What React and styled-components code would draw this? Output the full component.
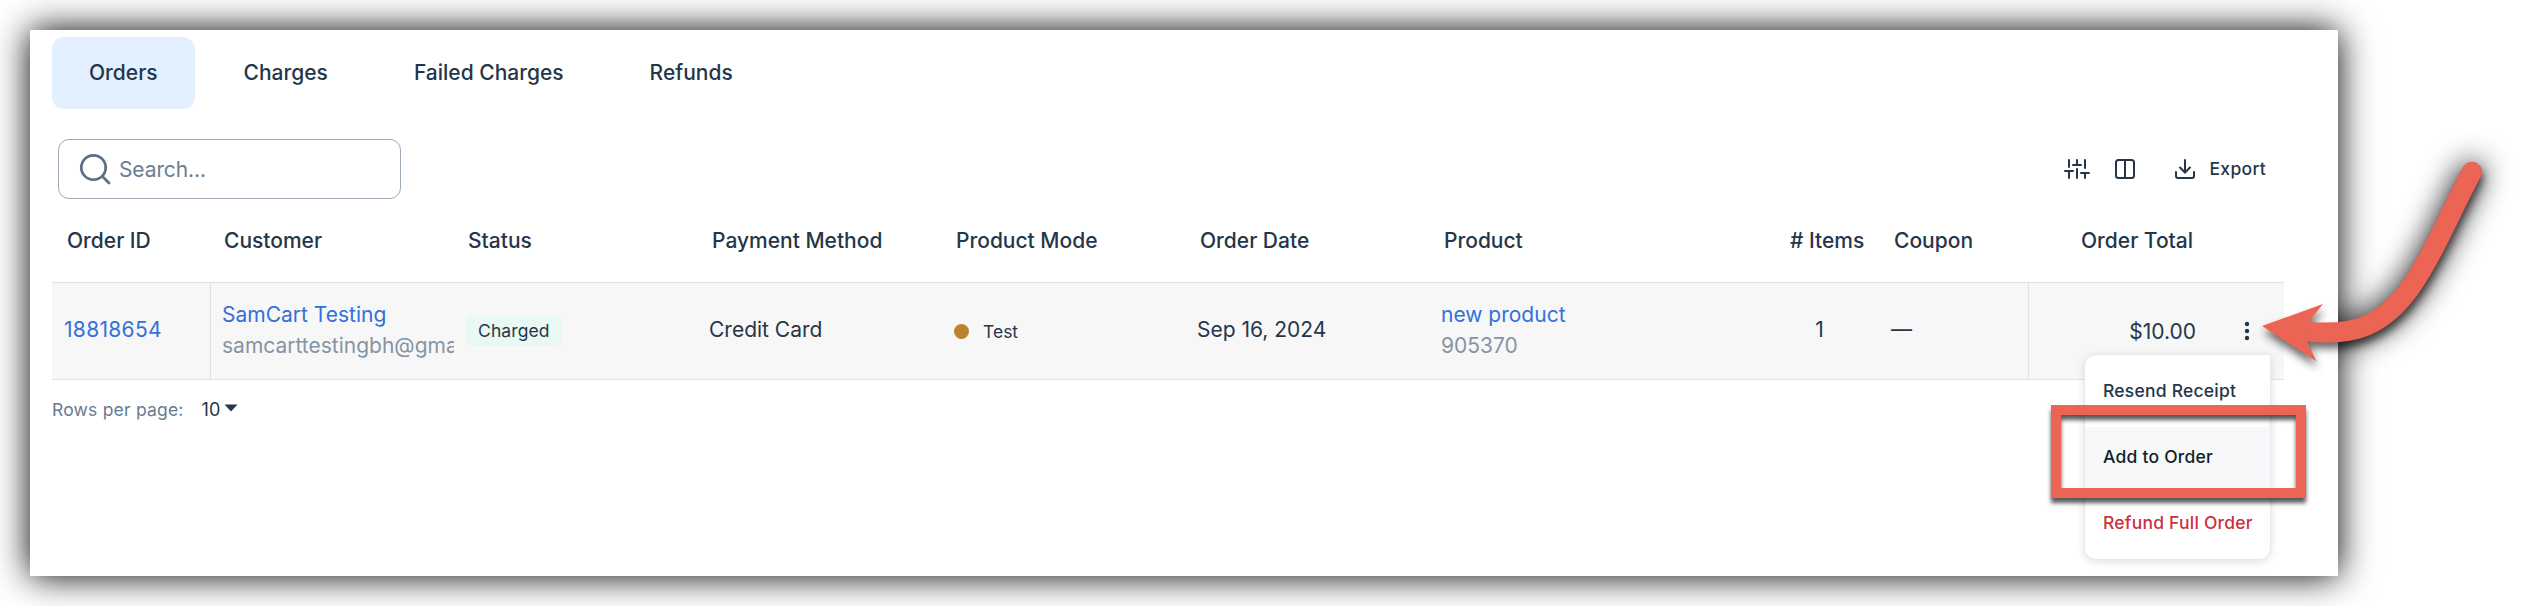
import React from "react";
import styled, { createGlobalStyle } from "styled-components";

const columns = [
  "Order ID",
  "Customer",
  "Status",
  "Payment Method",
  "Product Mode",
  "Order Date",
  "Product",
  "# Items",
  "Coupon",
  "Order Total",
];
const tabs = ["Orders", "Charges", "Failed Charges", "Refunds"];

const SlidersIcon = () => (
  <svg width="26" height="24" viewBox="0 0 26 24">
    <path
      d="M5 3v7M1 14h8M5 14v7M13 3v5M9 8h8M13 12v9M21 3v8M17 16h8M21 16v5"
      fill="none"
      stroke="currentColor"
      strokeWidth="2"
      strokeLinecap="round"
    />
  </svg>
);

const ColumnsIcon = () => (
  <svg width="22" height="22" viewBox="0 0 22 22">
    <g fill="none" stroke="currentColor" strokeWidth="2">
      <rect x="2" y="2" width="18" height="18" rx="2.5" />
      <path d="M11 2v18" />
    </g>
  </svg>
);

const DownloadIcon = () => (
  <svg width="22" height="22" viewBox="0 0 22 22">
    <path
      d="M11 2v12M6 9.500l5 5 5-5M2 14v4a2 2 0 0 0 2 2h14a2 2 0 0 0 2-2v-4"
      fill="none"
      stroke="currentColor"
      strokeWidth="2"
      strokeLinecap="round"
    />
  </svg>
);

const ArrowShape = () => (
  <>
    <path
      d="M2472 172C2455 202 2428 268 2404 296C2380 325 2355 336 2308 331.600"
      fill="none"
      stroke="#ec6453"
      strokeWidth="20"
      strokeLinecap="round"
    />
    <path d="M2262 326L2323 304L2309 321.500L2307 341.500L2316.500 361.500Z" fill="#ec6453" />
  </>
);

const App = () => {
  return (
    <>
      <GlobalStyle />
      {/* wide soft shadow of the arrow, kept under the panel */}
      <ArrowHalo width="288" height="260" viewBox="2240 140 288 260">
        <ArrowShape />
      </ArrowHalo>
      <Panel>
        <Tabs>
          {tabs.map((tab, index) => (
            <Tab key={tab} $active={index === 0}>
              {tab}
            </Tab>
          ))}
        </Tabs>
        <Toolbar>
          <SearchBox>
            <svg width="32" height="32" viewBox="0 0 32 32">
              <g fill="none" stroke="currentColor" strokeWidth="2.8">
                <circle cx="14.500" cy="14.500" r="12.200" />
                <path d="M23.500 23.500l6.500 6.500" strokeLinecap="round" />
              </g>
            </svg>
            <input type="text" placeholder="Search..." />
          </SearchBox>
          <Actions>
            <SlidersIcon />
            <ColumnsIcon />
            <ExportBtn type="button">
              <DownloadIcon />
              <span>Export</span>
            </ExportBtn>
          </Actions>
        </Toolbar>
        {/* orders table */}
        <HeadRow>
          {columns.map((c) => (
            <HeadCell key={c}>{c}</HeadCell>
          ))}
        </HeadRow>
        <Row>
          <Cell>
            <OrderLink>18818654</OrderLink>
          </Cell>
          <Cell $divider $stacked>
            <Link>SamCart Testing</Link>
            <Muted>samcarttestingbh@gmail.com</Muted>
          </Cell>
          <Cell>
            <Badge>Charged</Badge>
          </Cell>
          <Cell>Credit Card</Cell>
          <Cell>
            <Mode>Test</Mode>
          </Cell>
          <Cell>Sep 16, 2024</Cell>
          <Cell $stacked>
            <Link>new product</Link>
            <Muted>905370</Muted>
          </Cell>
          <Cell $center>1</Cell>
          <Cell>—</Cell>
          <TotalCell>
            <span>$10.00</span>
            <svg width="6" height="20" viewBox="0 0 6 20" fill="currentColor">
              <circle cx="3" cy="3" r="2.200" />
              <circle cx="3" cy="10" r="2.200" />
              <circle cx="3" cy="17" r="2.200" />
            </svg>
            <Menu>
              <MenuItem>Resend Receipt</MenuItem>
              <MenuItem $active>Add to Order</MenuItem>
              <MenuItem $danger>Refund Full Order</MenuItem>
            </Menu>
          </TotalCell>
        </Row>
        {/* end of orders table */}
        <Pager>
          <span>Rows per page:</span>
          <strong>10</strong>
          <svg width="14" height="8" viewBox="0 0 14 8">
            <path d="M0.500 0.500h13l-6.500 7z" fill="#25364a" />
          </svg>
        </Pager>
        <Highlight />
      </Panel>
      <Arrow width="288" height="260" viewBox="2240 140 288 260">
        <ArrowShape />
      </Arrow>
    </>
  );
};

const GlobalStyle = createGlobalStyle`
  * {
    box-sizing: border-box;
  }
  body {
    margin: 0;
    height: 606px;
    overflow: hidden;
    background: #fff;
    color: #25364a;
    font-family: Inter, "Liberation Sans", sans-serif;
    font-size: 21px;
  }
  svg {
    display: block;
    flex: none;
  }
`;

const Panel = styled.main`
  position: relative;
  z-index: 1;
  width: 2308px;
  height: 546px;
  margin: 30px 0 0 30px;
  padding: 7px 54px 0 22px;
  background: #fff;
  box-shadow: 0 0 34px 0 #000;
`;

const Tabs = styled.nav`
  display: flex;
  gap: 12px;
`;

const Tab = styled.a`
  height: 72px;
  padding: 0 37px;
  border-radius: 12px;
  background: ${(props) => (props.$active ? "#e2f0ff" : "transparent")};
  font-weight: 500;
  line-height: 72px;
`;

const Toolbar = styled.div`
  display: flex;
  align-items: center;
  justify-content: space-between;
  height: 60px;
  margin-top: 30px;
  padding: 0 18px 0 6px;
`;

const SearchBox = styled.label`
  display: flex;
  align-items: center;
  gap: 8px;
  width: 343px;
  height: 60px;
  padding-left: 20px;
  border: 1px solid #9eabb9;
  border-radius: 11px;
  color: #5b7087;
  input {
    width: 250px;
    padding: 0;
    border: 0;
    outline: 0;
    background: none;
    font: inherit;
    letter-spacing: -0.1px;
  }
  input::placeholder {
    color: #6a7d92;
    opacity: 1;
  }
`;

const Actions = styled.div`
  display: flex;
  align-items: center;
  gap: 24px;
`;

const ExportBtn = styled.button`
  display: flex;
  align-items: center;
  gap: 13px;
  margin-left: 14px;
  padding: 0;
  border: 0;
  background: none;
  color: inherit;
  font: 500 17.5px Inter, sans-serif;
  letter-spacing: 0.3px;
  span {
    margin-top: -1px;
  }
`;

const HeadRow = styled.div`
  display: grid;
  grid-template-columns: 158px 244px 244px 244px 244px 244px 346px 104px 148px 256px;
  height: 83px;
`;

const HeadCell = styled.div`
  padding: 0 0 0 14px;
  font-weight: 500;
  line-height: 83px;
  white-space: nowrap;
  &:first-child {
    padding-left: 15px;
  }
  &:last-child {
    padding-left: 53px;
  }
`;

const Row = styled(HeadRow)`
  height: 98px;
  border: 1px solid #dfe3e8;
  border-width: 1px 0;
  background: #f7f7f7;
`;

const Cell = styled.div`
  display: flex;
  flex-direction: column;
  justify-content: center;
  align-items: ${(props) => (props.$center ? "center" : "flex-start")};
  min-width: 0;
  padding: 0 ${(props) => (props.$center ? "17px" : "0")}
    ${(props) => (props.$stacked ? "2px" : "3px")}
    ${(props) => (props.$center ? "0" : "11px")};
  border-left: ${(props) => (props.$divider ? "1px solid #dfe3e8" : "0")};
  line-height: 31px;
  white-space: nowrap;
`;

const Link = styled.a`
  color: #3470da;
`;

const OrderLink = styled(Link)`
  margin-left: 1px;
  letter-spacing: 0.3px;
`;

const Muted = styled.div`
  width: 232px;
  overflow: hidden;
  color: #8494a5;
`;

const Badge = styled.span`
  height: 30px;
  margin: 3px 0 0 1px;
  padding: 0 12px;
  border-radius: 6px;
  background: #e8f8f3;
  font-size: 17.5px;
  letter-spacing: 0.1px;
  line-height: 30px;
`;

const Mode = styled.span`
  display: flex;
  align-items: center;
  gap: 14px;
  margin: 3px 0 0 1px;
  font-size: 17.5px;
  &::before {
    width: 15px;
    height: 15px;
    border-radius: 50%;
    background: #b9832b;
    content: "";
  }
`;

const TotalCell = styled.div`
  position: relative;
  display: flex;
  align-items: center;
  justify-content: flex-end;
  gap: 48px;
  padding-right: 34px;
  border-left: 1px solid #dfe3e8;
`;

const Menu = styled.div`
  position: absolute;
  z-index: 1;
  top: 71px;
  right: 13px;
  width: 187px;
  height: 206px;
  padding-top: 6px;
  border: 1px solid #e7e9ec;
  border-radius: 12px 0 12px 12px;
  background: #fff;
  box-shadow: 0 2px 8px rgba(0, 0, 0, 0.12);
`;

const MenuItem = styled.div`
  height: 66px;
  padding-left: 18px;
  background: ${(props) => (props.$active ? "#f6f8fa" : "transparent")};
  color: ${(props) => (props.$danger ? "#cb303f" : props.$active ? "#121d28" : "inherit")};
  font-size: 17.5px;
  font-weight: 500;
  line-height: 59px;
  letter-spacing: 0.22px;
  white-space: nowrap;
`;

const Pager = styled.div`
  display: flex;
  align-items: center;
  height: 58px;
  color: #677b90;
  font-size: 17.5px;
  letter-spacing: 0.2px;
  strong {
    margin: 0 3px 0 18px;
    color: #25364a;
    font-size: 18px;
    font-weight: 400;
  }
  svg {
    margin-top: -3px;
  }
`;

const Highlight = styled.div`
  position: absolute;
  z-index: 2;
  top: 375px;
  left: 2021px;
  width: 255px;
  height: 93px;
  border: 10px solid #ec6453;
  filter: drop-shadow(0 5px 2px rgba(0, 0, 0, 0.65));
`;

const Arrow = styled.svg`
  position: absolute;
  z-index: 3;
  top: 140px;
  left: 2240px;
  overflow: visible;
  filter: drop-shadow(1px 6px 4px rgba(0, 0, 0, 0.6));
`;

const ArrowHalo = styled(Arrow)`
  z-index: 0;
  filter: drop-shadow(0 0 15px #000);
`;

export default App;
